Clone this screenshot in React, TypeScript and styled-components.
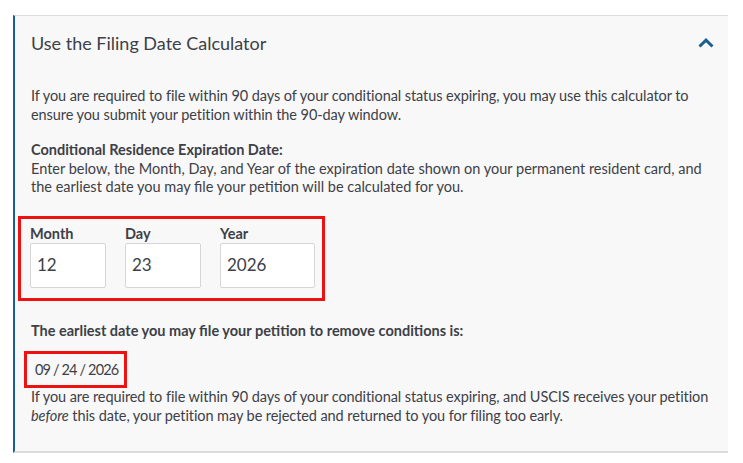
import React from "react";
import styled, { createGlobalStyle } from "styled-components";

const Global = createGlobalStyle`
  html, body { margin: 0; padding: 0; background: #ffffff; }
  body { font-family: Lato, "Noto Sans", sans-serif; color: #3d4047; }
  * { box-sizing: border-box; }
`;

const Panel = styled.section`
  margin: 15px 15px 0 13px;
  background: #f8f8f8;
  border-top: 1px solid #dcdcdc;
  border-bottom: 2px solid #dcdcdc;
  border-left: 2px solid #1a5e92;
  padding-bottom: 26px;
`;

const Header = styled.div`
  display: flex;
  align-items: center;
  justify-content: space-between;
  height: 54px;
  padding: 0 14px 0 16px;
`;

const Title = styled.h2`
  margin: 0;
  font-size: 18px;
  font-weight: 400;
  color: #3d4047;
`;

const Body = styled.div`
  padding: 17px 16px 0 16px;
`;

const Para = styled.p<{ $condensed?: boolean }>`
  margin: 0;
  font-size: 14.5px;
  line-height: 18.5px;
  letter-spacing: ${(p) => (p.$condensed ? "-0.08px" : "0px")};
`;

const Strong = styled.strong`
  font-weight: 700;
  display: block;
`;

const Section = styled.div<{ $top: number }>`
  margin-top: ${(p) => p.$top}px;
`;

const Fields = styled.div`
  display: inline-flex;
  gap: 19px;
  margin: 19px 0 0 -13px;
  padding: 6px 7px 10px 9px;
  border: 3px solid #ee1111;
`;

const Field = styled.label`
  display: flex;
  flex-direction: column;
  font-size: 14.5px;
  font-weight: 700;
  line-height: 18px;
`;

const Input = styled.div<{ $w: number }>`
  width: ${(p) => p.$w}px;
  height: 45px;
  background: #ffffff;
  border: 1px solid #d6d6d6;
  border-radius: 2px;
  display: flex;
  align-items: center;
  padding-left: 6px;
  font-size: 17px;
  font-weight: 400;
`;

const ResultLabel = styled.p`
  margin: 21px 0 0 0;
  font-size: 14.5px;
  line-height: 18.5px;
  font-weight: 700;
`;

const ResultBox = styled.div`
  display: inline-flex;
  align-items: center;
  height: 37px;
  margin: 11px 0 0 -7px;
  padding: 0 6px 0 8px;
  border: 3px solid #ee1111;
  font-size: 14.5px;
  letter-spacing: -0.85px;
`;

const Chevron = () => (
  <svg width="16" height="10" viewBox="0 0 16 10" aria-hidden="true">
    <path d="M1.5 8.5 L8 2.2 L14.5 8.5" fill="none" stroke="#1a5e92" strokeWidth="3" />
  </svg>
);

export default function App() {
  return (
    <>
      <Global />
      <Panel>
        <Header>
          <Title>Use the Filing Date Calculator</Title>
          <Chevron />
        </Header>
        <Body>
          <Para $condensed>
            If you are required to file within 90 days of your conditional status expiring, you may use this calculator to
            ensure you submit your petition within the 90-day window.
          </Para>
          <Section $top={17}>
            <Para>
              <Strong>Conditional Residence Expiration Date:</Strong>
              Enter below, the Month, Day, and Year of the expiration date shown on your permanent resident card, and
              the earliest date you may file your petition will be calculated for you.
            </Para>
          </Section>
          <Fields>
            <Field>
              Month
              <Input $w={76}>12</Input>
            </Field>
            <Field>
              Day
              <Input $w={76}>23</Input>
            </Field>
            <Field>
              Year
              <Input $w={95}>2026</Input>
            </Field>
          </Fields>
          <ResultLabel>The earliest date you may file your petition to remove conditions is:</ResultLabel>
          <ResultBox>09 / 24 / 2026</ResultBox>
          <Para $condensed>
            If you are required to file within 90 days of your conditional status expiring, and USCIS receives your petition{" "}
            <em>before</em> this date, your petition may be rejected and returned to you for filing too early.
          </Para>
        </Body>
      </Panel>
    </>
  );
}
